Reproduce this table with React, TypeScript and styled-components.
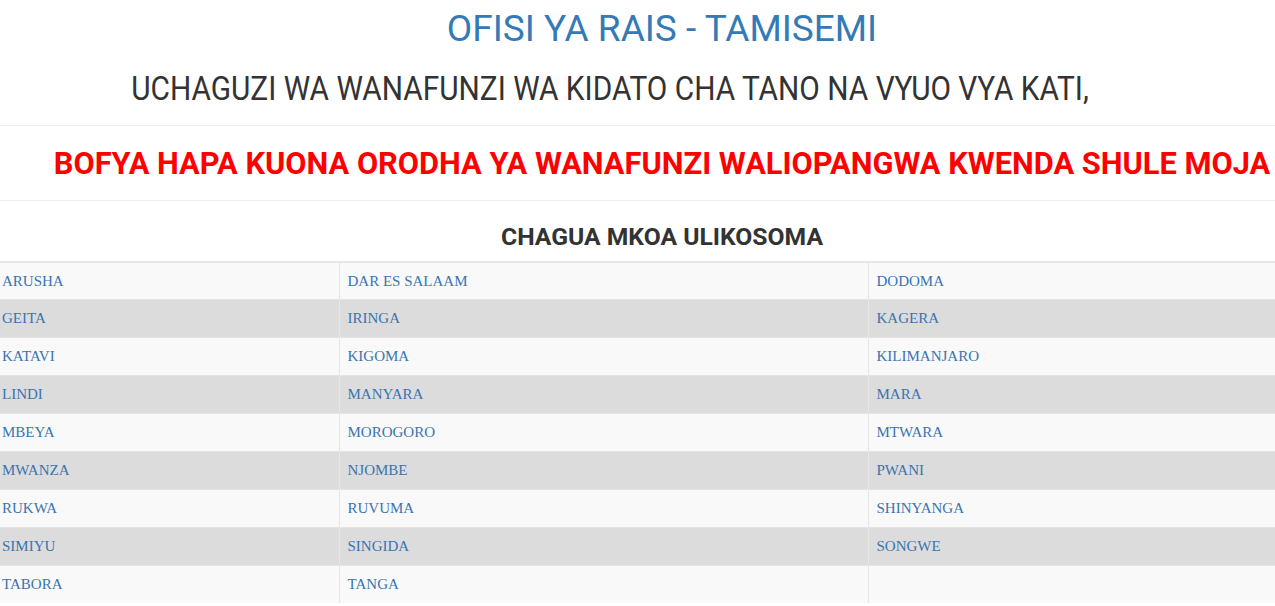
import React from "react";
import styled, { createGlobalStyle } from "styled-components";

const Global = createGlobalStyle`
  html, body { margin: 0; padding: 0; background: #fff; overflow: hidden; }
  body { font-family: Roboto, "Liberation Sans", sans-serif; color: #333; }
`;

const Page = styled.div`
  width: 1336px;
  margin-left: -6px;
`;

const Title = styled.h1`
  margin: 9px 0 0;
  font-size: 37px;
  line-height: 40px;
  font-weight: 400;
  text-align: center;
  color: #337ab7;
`;

const Subtitle = styled.h2`
  margin: 18.5px 0 0;
  padding-right: 104px;
  font-size: 34px;
  line-height: 40px;
  font-weight: 400;
  text-align: center;
  color: #333;
`;

const Condensed = styled.span`
  display: inline-block;
  white-space: nowrap;
  transform: scaleX(0.877);
`;

const Rule = styled.hr<{ $top: number }>`
  margin: ${(p) => p.$top}px 0 0;
  border: 0;
  border-top: 1px solid #eee;
  height: 0;
`;

const Notice = styled.a`
  display: block;
  margin-top: 20px;
  font-size: 30.8px;
  line-height: 36px;
  font-weight: 700;
  text-align: center;
  color: #ff0000;
  text-decoration: none;
  white-space: nowrap;
`;

const SectionTitle = styled.h3`
  margin: 22px 0 9.5px;
  font-size: 24.7px;
  line-height: 28px;
  font-weight: 700;
  text-align: center;
  color: #333;
`;

const Table = styled.table`
  width: 100%;
  table-layout: fixed;
  border-collapse: collapse;
  border-top: 2px solid #e6e6e6;
  font-family: "Liberation Serif", "Times New Roman", serif;
  font-size: 15px;
`;

const Row = styled.tr<{ $dark: boolean }>`
  background: ${(p) => (p.$dark ? "#dcdcdc" : "#f9f9f9")};
`;

const Cell = styled.td<{ $w: number }>`
  box-sizing: border-box;
  width: ${(p) => p.$w}px;
  padding: 8px;
  line-height: 20.9px;
  border-top: 1px solid #e4e4e4;
  border-left: 1px solid #e6e6e6;
  vertical-align: top;
  &:first-child { border-left: 0; }
`;

const Link = styled.a`
  color: #3a74b0;
  text-decoration: none;
`;

const regions = [
  "ARUSHA", "DAR ES SALAAM", "DODOMA",
  "GEITA", "IRINGA", "KAGERA",
  "KATAVI", "KIGOMA", "KILIMANJARO",
  "LINDI", "MANYARA", "MARA",
  "MBEYA", "MOROGORO", "MTWARA",
  "MWANZA", "NJOMBE", "PWANI",
  "RUKWA", "RUVUMA", "SHINYANGA",
  "SIMIYU", "SINGIDA", "SONGWE",
  "TABORA", "TANGA", "",
];

const widths = [345, 529, 462];

export default function App() {
  const rows: string[][] = [];
  for (let i = 0; i < regions.length; i += 3) rows.push(regions.slice(i, i + 3));
  return (
    <>
      <Global />
      <Page>
        <Title>OFISI YA RAIS - TAMISEMI</Title>
        <Subtitle>
          <Condensed>UCHAGUZI WA WANAFUNZI WA KIDATO CHA TANO NA VYUO VYA KATI,</Condensed>
        </Subtitle>
        <Rule $top={17.5} />
        <Notice href="#">BOFYA HAPA KUONA ORODHA YA WANAFUNZI WALIOPANGWA KWENDA SHULE MOJA</Notice>
        <Rule $top={18} />
        <SectionTitle>CHAGUA MKOA ULIKOSOMA</SectionTitle>
        <Table>
          <tbody>
            {rows.map((r, i) => (
              <Row key={i} $dark={i % 2 === 1}>
                {r.map((name, j) => (
                  <Cell key={j} $w={widths[j]}>
                    {name && <Link href="#">{name}</Link>}
                  </Cell>
                ))}
              </Row>
            ))}
          </tbody>
        </Table>
      </Page>
    </>
  );
}
